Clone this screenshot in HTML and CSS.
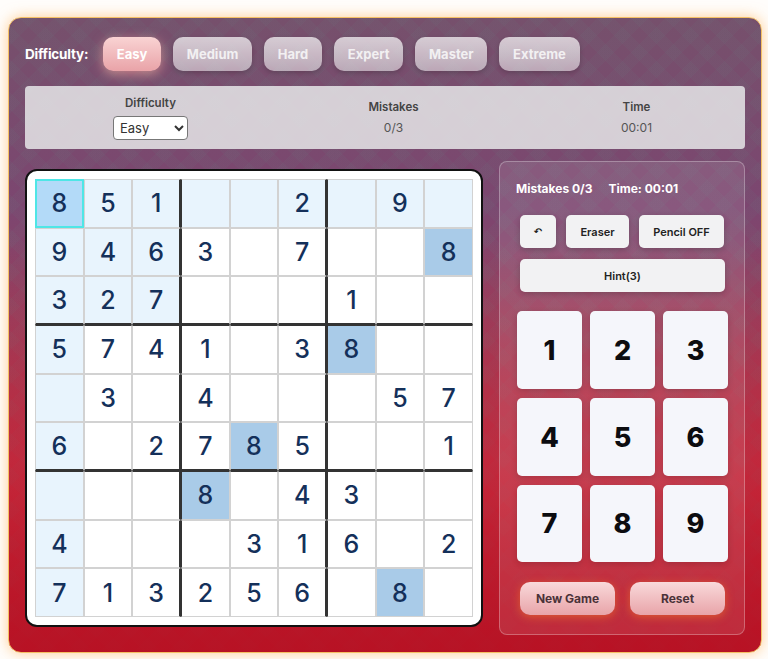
FILE: index.html
```html
<!DOCTYPE html>
<html lang="en">
<head>
  <meta charset="UTF-8">
  <meta name="viewport" content="width=device-width, initial-scale=1.0">
  <title>Sudoku</title>
  <link rel="stylesheet" href="styles.css">
</head>
<body>

<div class="game">
  <div class="levels">
    <span class="levels-label">Difficulty:</span>
    <button class="level-btn active">Easy</button>
    <button class="level-btn">Medium</button>
    <button class="level-btn">Hard</button>
    <button class="level-btn">Expert</button>
    <button class="level-btn">Master</button>
    <button class="level-btn">Extreme</button>
  </div>

  <div class="info-bar">
    <div class="info-item">
      <label class="info-label" for="levelSelect">Difficulty</label>
      <select id="levelSelect" class="level-select">
        <option>Easy</option>
        <option>Medium</option>
        <option>Hard</option>
      </select>
    </div>
    <div class="info-item">
      <span class="info-label">Mistakes</span>
      <span class="info-value">0/3</span>
    </div>
    <div class="info-item">
      <span class="info-label">Time</span>
      <span class="info-value">00:01</span>
    </div>
  </div>

  <div class="play-area">
    <div class="board">
      <div class="grid" id="grid"></div>
    </div>

    <div class="panel">
      <div class="status">
        <span>Mistakes 0/3</span>
        <span>Time: 00:01</span>
      </div>
      <div class="actions">
        <button class="action-btn undo-btn">↶</button>
        <button class="action-btn eraser-btn">Eraser</button>
        <button class="action-btn pencil-btn">Pencil OFF</button>
      </div>
      <button class="action-btn hint-btn">Hint(3)</button>
      <div class="numpad">
        <button class="num-btn">1</button>
        <button class="num-btn">2</button>
        <button class="num-btn">3</button>
        <button class="num-btn">4</button>
        <button class="num-btn">5</button>
        <button class="num-btn">6</button>
        <button class="num-btn">7</button>
        <button class="num-btn">8</button>
        <button class="num-btn">9</button>
      </div>
      <div class="footer-btns">
        <button class="pink-btn">New Game</button>
        <button class="pink-btn">Reset</button>
      </div>
    </div>
  </div>
</div>

<script src="script.js"></script>
</body>
</html>
```

FILE: styles.css
```css
* {
  box-sizing: border-box;
}
body {
  margin: 0;
  padding: 17px 6px 6px 8px;
  height: 659px;
  overflow: hidden;
  background: #fffdfb;
  font-family: Inter, "Liberation Sans", sans-serif;
}
button {
  font-family: inherit;
  border: none;
  cursor: pointer;
}
.game {
  width: 754px;
  height: 636px;
  padding: 19px 16px 0;
  border-radius: 13px;
  border: 1px solid #f4c064;
  box-shadow: 0 0 14px rgba(255, 170, 70, 0.55);
  background:
    linear-gradient(180deg, transparent 35%, rgba(196, 36, 56, 0.6) 70%, rgba(184, 18, 36, 0.9) 100%),
    repeating-linear-gradient(45deg, rgba(100, 130, 130, 0.08) 0 12px, transparent 12px 24px),
    repeating-linear-gradient(-45deg, rgba(100, 130, 130, 0.08) 0 12px, transparent 12px 24px),
    linear-gradient(180deg, #76506c 0%, #7c4670 30%, #96405f 50%, #c52a3c 75%, #b51224 100%);
}
.levels {
  display: flex;
  align-items: center;
  gap: 12px;
  height: 34px;
}
.levels-label {
  width: 66px;
  color: #fff;
  font-size: 13.5px;
  font-weight: 700;
  white-space: nowrap;
  letter-spacing: -0.2px;
}
.level-btn {
  height: 34px;
  padding: 0 13.75px;
  border-radius: 10px;
  color: #f2f0f2;
  font-size: 13px;
  font-weight: 700;
  background: linear-gradient(180deg, rgba(255, 255, 255, 0.7), rgba(255, 255, 255, 0.5));
  box-shadow: 0 2px 5px rgba(0, 0, 0, 0.18);
}
.level-btn.active {
  color: #fff;
  background: linear-gradient(180deg, #f9d3d3, #e9a3a8);
  box-shadow: 0 3px 12px rgba(255, 170, 160, 0.6);
}
.info-bar {
  display: grid;
  grid-template-columns: repeat(3, 243px);
  align-items: center;
  height: 63px;
  margin: 15px 0 12px;
  padding-left: 4px;
  border-radius: 4px;
  background: rgba(238, 240, 240, 0.8);
}
.info-item {
  display: flex;
  flex-direction: column;
  align-items: center;
  gap: 6px;
}
.info-label {
  color: #444;
  font-size: 11.5px;
  font-weight: 600;
}
.info-value {
  color: #555;
  font-size: 12px;
}
.level-select {
  width: 75px;
  height: 24px;
  padding: 0 2px;
  background: #fff;
  border: 1px solid #777;
  border-radius: 4px;
  color: #333;
  font-family: inherit;
  font-size: 13px;
}
.play-area {
  display: flex;
  align-items: center;
  gap: 16px;
}
.board {
  flex: none;
  width: 458px;
  height: 458px;
  padding: 8px;
  background: #fff;
  border: 2px solid #111;
  border-radius: 12px;
}
.grid {
  display: grid;
  grid-template-columns: repeat(9, 1fr);
  grid-template-rows: repeat(9, 1fr);
  height: 100%;
}
.cell {
  display: flex;
  align-items: center;
  justify-content: center;
  border: 1px solid #d2d2d2;
  color: #14305a;
  font-size: 25px;
  font-weight: 500;
}
.cell.related {
  background: #e8f4fd;
}
.cell.same {
  background: #a9cbe8;
}
.cell.selected {
  background: #b3daf8;
  border: 2px solid #4fe6e6;
}
.cell.box-right {
  border-right: 2px solid #333;
}
.cell.box-left {
  border-left: 1px solid #333;
}
.cell.box-bottom {
  border-bottom: 2px solid #333;
}
.cell.box-top {
  border-top: 1px solid #333;
}
.panel {
  flex: none;
  width: 246px;
  height: 474px;
  padding: 0 17px;
  border-radius: 8px;
  border: 1px solid rgba(255, 255, 255, 0.28);
  background: rgba(255, 255, 255, 0.1);
}
.status {
  display: flex;
  gap: 16px;
  height: 53px;
  align-items: center;
  margin-left: -1px;
  color: #fff;
  font-size: 12px;
  font-weight: 700;
  white-space: nowrap;
}
.actions {
  display: flex;
  gap: 10px;
  margin: 0 3px 11px;
}
.action-btn {
  height: 33px;
  border-radius: 5px;
  color: #222;
  font-size: 11px;
  font-weight: 600;
  background: #f2f2f3;
  box-shadow: 0 2px 6px rgba(0, 0, 0, 0.2);
}
.undo-btn {
  width: 36px;
  padding: 0;
  font-family: "DejaVu Sans", sans-serif;
  font-size: 10px;
}
.eraser-btn {
  width: 63px;
}
.pencil-btn {
  width: 85px;
}
.hint-btn {
  display: block;
  width: 205px;
  margin: 0 3px;
}
.numpad {
  display: grid;
  grid-template-columns: repeat(3, 65px);
  grid-template-rows: 78px 78px 77px;
  gap: 9px 8px;
  margin: 19px 0 20px;
}
.num-btn {
  padding: 0;
  border-radius: 5px;
  color: #0c0c10;
  font-size: 27px;
  font-weight: 800;
  background: #f5f6fb;
  box-shadow: 0 2px 6px rgba(0, 0, 0, 0.15);
}
.footer-btns {
  display: flex;
  gap: 15px;
  margin-left: 3px;
}
.pink-btn {
  width: 95px;
  height: 33px;
  border-radius: 10px;
  color: #4a3238;
  font-size: 12px;
  font-weight: 700;
  background: linear-gradient(180deg, #f9d9da, #e8a4a9);
  box-shadow: 0 2px 8px rgba(240, 120, 40, 0.6);
}
```

FILE: script.js
```js
const puzzle = [
  "851002090",
  "946307008",
  "327000100",
  "574103800",
  "030400057",
  "602785001",
  "000804300",
  "400031602",
  "713256080"
];

const grid = document.getElementById("grid");

puzzle.forEach((row, r) => {
  [...row].forEach((ch, c) => {
    let cell = document.createElement("div");
    cell.classList.add("cell");

    let value = ch === "0" ? "" : ch;
    cell.textContent = value;

    if (r === 0 || c === 0 || (r < 3 && c < 3)) cell.classList.add("related");
    if (value === "8") cell.classList.add("same");
    if (r === 0 && c === 0) cell.classList.add("selected");

    if (c === 2 || c === 5) cell.classList.add("box-right");
    if (c === 3 || c === 6) cell.classList.add("box-left");
    if (r === 2 || r === 5) cell.classList.add("box-bottom");
    if (r === 3 || r === 6) cell.classList.add("box-top");

    grid.appendChild(cell);
  });
});
```
